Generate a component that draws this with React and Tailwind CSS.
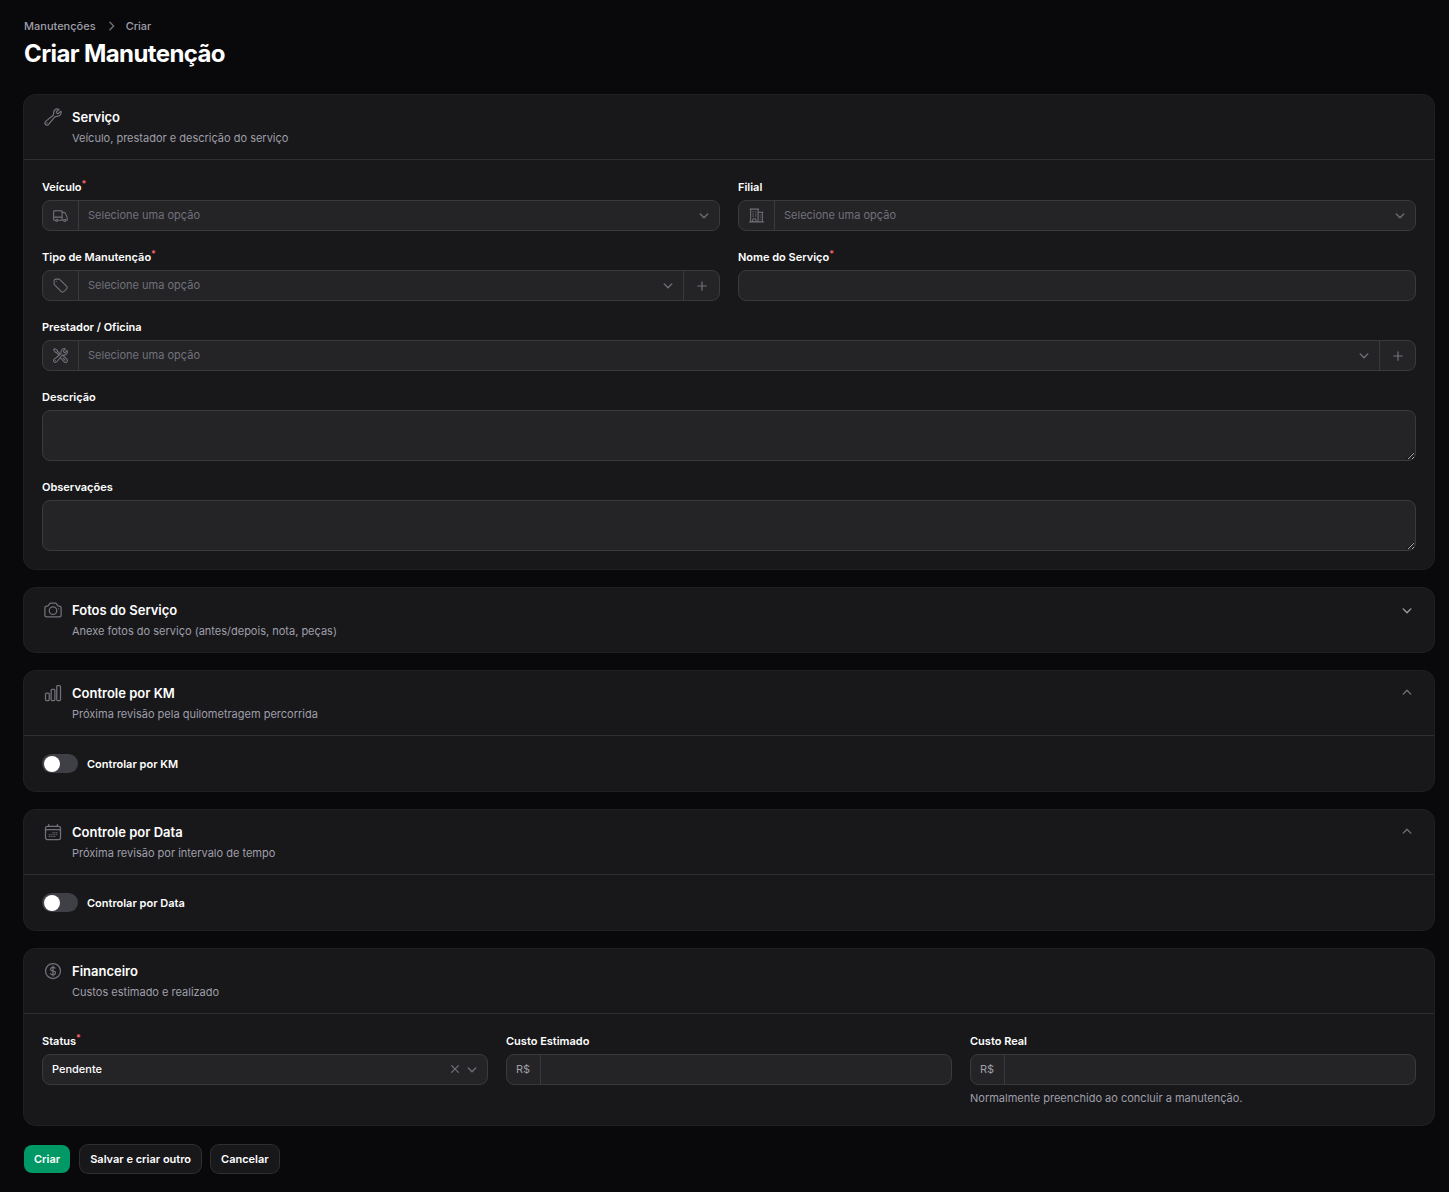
import React, { useState } from 'react'
import {
  HiOutlineWrench,
  HiOutlineTruck,
  HiOutlineBuildingOffice2,
  HiOutlineTag,
  HiOutlineWrenchScrewdriver,
  HiOutlineCamera,
  HiOutlineChartBar,
  HiOutlineCalendarDays,
  HiOutlineCurrencyDollar,
  HiMiniChevronDown,
  HiMiniChevronUp,
  HiMiniChevronRight,
  HiMiniPlus,
  HiMiniXMark,
} from 'react-icons/hi2'

function Section({ icon: Icon, title, description, collapsible, collapsed, children }) {
  const [open, setOpen] = useState(!collapsed);
  return (
    <section className="rounded-xl bg-[#18181b] ring-1 ring-[#202023]">
      <header className="flex items-start gap-[9px] py-3 pr-[18px] pl-[19px]">
        <Icon className="size-5 shrink-0 text-[#71717b]" />
        <div className="flex-1">
          <h2 className="text-[13px] leading-5 font-semibold text-white">{title}</h2>
          <p className="mt-0.5 text-[11px] leading-[18px] text-[#9f9fa9]">{description}</p>
        </div>
        {collapsible && (
          <button
            type="button"
            aria-label={title}
            aria-expanded={open}
            onClick={() => setOpen(!open)}
            className={`flex h-5 w-[18px] items-center ${open ? 'text-[#71717b]' : 'text-[#9f9fa9]'}`}
          >
            {open ? <HiMiniChevronUp className="size-[18px]" /> : <HiMiniChevronDown className="size-[18px]" />}
          </button>
        )}
      </header>
      {open && children && (
        <div className="border-t border-[#2f2f32] p-[18px]">{children}</div>
      )}
    </section>
  )
}

function Field({ id, label, required, className, hint, children }) {
  return (
    <div className={`flex flex-col gap-1 ${className || ''}`}>
      <label htmlFor={id} className="text-[11px] leading-[18px] font-semibold text-white">
        {label}
        {required && <sup className="text-[9px] text-[#ff6467]">*</sup>}
      </label>
      {children}
      {hint && <p className="text-[11px] leading-[18px] text-[#9f9fa9]">{hint}</p>}
    </div>
  )
}

function Box({ children }) {
  return (
    <div className="flex h-[31px] overflow-hidden rounded-lg border border-[#3a3a3d] bg-[#242427] text-[11px]">
      {children}
    </div>
  )
}

function SelectField({ id, label, required, className, icon: Icon, create }) {
  return (
    <Field id={id} label={label} required={required} className={className}>
      <Box>
        <div className="flex w-9 shrink-0 items-center justify-center border-r border-[#3a3a3d]">
          <Icon className="size-[17px] text-[#71717b]" />
        </div>
        <div className="relative flex-1">
          <select id={id} className="h-full w-full appearance-none bg-transparent pr-8 pl-[9px] text-[#71717b] outline-none">
            <option>Selecione uma opção</option>
          </select>
          <HiMiniChevronDown className="pointer-events-none absolute top-[5px] right-1.5 size-[18px] text-[#71717b]" />
        </div>
        {create && (
          <button
            type="button"
            aria-label="Criar"
            className="flex w-9 items-center justify-center border-l border-[#3a3a3d] text-[#71717b]"
          >
            <HiMiniPlus className="size-4" />
          </button>
        )}
      </Box>
    </Field>
  )
}

function TextareaField({ id, label }) {
  return (
    <Field id={id} label={label} className="col-span-2">
      <textarea
        id={id}
        className="block h-[51px] w-full rounded-lg border border-[#3a3a3d] bg-[#242427] px-[9px] py-1 text-[11px] text-white outline-none"
      />
    </Field>
  )
}

function MoneyField({ id, label, hint }) {
  return (
    <Field id={id} label={label} hint={hint}>
      <Box>
        <div className="flex shrink-0 items-center border-r border-[#3a3a3d] pr-[10px] pl-[9px] text-[#9f9fa9]">R$</div>
        <input id={id} type="text" className="min-w-0 flex-1 bg-transparent px-[9px] text-white outline-none" />
      </Box>
    </Field>
  )
}

function Toggle({ id, label }) {
  return (
    <div className="flex items-center gap-[9px]">
      <input
        id={id}
        type="checkbox"
        role="switch"
        className="flex h-[19px] w-9 appearance-none items-center rounded-full bg-[#3f3f46] px-0.5 before:size-4 before:rounded-full before:bg-white checked:justify-end checked:bg-[#009966]"
      />
      <label htmlFor={id} className="text-[11px] leading-[18px] font-semibold text-white">
        {label}
      </label>
    </div>
  )
}

function App() {
  return (
    <div className="min-h-screen bg-[#09090b] pt-[17px] pr-[15px] pb-[18px] pl-6 font-[Inter,sans-serif]">
      <nav className="flex items-center gap-[6px] text-[11px] leading-[18px] font-medium text-[#9f9fa9]">
        <a href="#manutencoes">Manutenções</a>
        <HiMiniChevronRight className="size-[18px] text-[#71717b]" />
        <span>Criar</span>
      </nav>
      <h1 className="mt-[3px] text-[24px] leading-8 font-bold tracking-tight text-white">Criar Manutenção</h1>

      <form className="mt-[25px]">
        <div className="flex flex-col gap-[19px]">
          <Section icon={HiOutlineWrench} title="Serviço" description="Veículo, prestador e descrição do serviço">
            <div className="grid grid-cols-2 gap-x-[18px] gap-y-[17px]">
              <SelectField id="veiculo" label="Veículo" required icon={HiOutlineTruck} />
              <SelectField id="filial" label="Filial" icon={HiOutlineBuildingOffice2} />
              <SelectField id="tipo" label="Tipo de Manutenção" required icon={HiOutlineTag} create />
              <Field id="nome" label="Nome do Serviço" required>
                <Box>
                  <input id="nome" type="text" className="min-w-0 flex-1 bg-transparent px-[9px] text-white outline-none" />
                </Box>
              </Field>
              <SelectField
                id="prestador"
                label="Prestador / Oficina"
                className="col-span-2"
                icon={HiOutlineWrenchScrewdriver}
                create
              />
              <TextareaField id="descricao" label="Descrição" />
              <TextareaField id="observacoes" label="Observações" />
            </div>
          </Section>

          <Section
            icon={HiOutlineCamera}
            title="Fotos do Serviço"
            description="Anexe fotos do serviço (antes/depois, nota, peças)"
            collapsible
            collapsed
          />

          <Section
            icon={HiOutlineChartBar}
            title="Controle por KM"
            description="Próxima revisão pela quilometragem percorrida"
            collapsible
          >
            <Toggle id="controlar-km" label="Controlar por KM" />
          </Section>

          <Section
            icon={HiOutlineCalendarDays}
            title="Controle por Data"
            description="Próxima revisão por intervalo de tempo"
            collapsible
          >
            <Toggle id="controlar-data" label="Controlar por Data" />
          </Section>

          <Section icon={HiOutlineCurrencyDollar} title="Financeiro" description="Custos estimado e realizado">
            <div className="grid grid-cols-3 gap-[18px]">
              <Field id="status" label="Status" required>
                <Box>
                  <div className="relative flex-1">
                    <select id="status" className="h-full w-full appearance-none bg-transparent pr-12 pl-[9px] font-medium text-white outline-none">
                      <option>Pendente</option>
                    </select>
                    <button type="button" aria-label="Limpar" className="absolute top-1.5 right-6 text-[#71717b]">
                      <HiMiniXMark className="size-4" />
                    </button>
                    <HiMiniChevronDown className="pointer-events-none absolute top-[5px] right-1.5 size-[18px] text-[#71717b]" />
                  </div>
                </Box>
              </Field>
              <MoneyField id="custo-estimado" label="Custo Estimado" />
              <MoneyField id="custo-real" label="Custo Real" hint="Normalmente preenchido ao concluir a manutenção." />
            </div>
          </Section>
        </div>

        <div className="mt-5 flex items-center gap-[10px] text-[11px] leading-[18px] font-semibold text-white">
          <button type="submit" className="rounded-lg bg-[#009966] px-[10px] py-[5px]">
            Criar
          </button>
          <button type="button" className="rounded-lg bg-[#18181b] px-[10px] py-[5px] ring-1 ring-[#2f2f32]">
            Salvar e criar outro
          </button>
          <button type="button" className="rounded-lg bg-[#18181b] px-[10px] py-[5px] ring-1 ring-[#2f2f32]">
            Cancelar
          </button>
        </div>
      </form>
    </div>
  )
}

export default App
